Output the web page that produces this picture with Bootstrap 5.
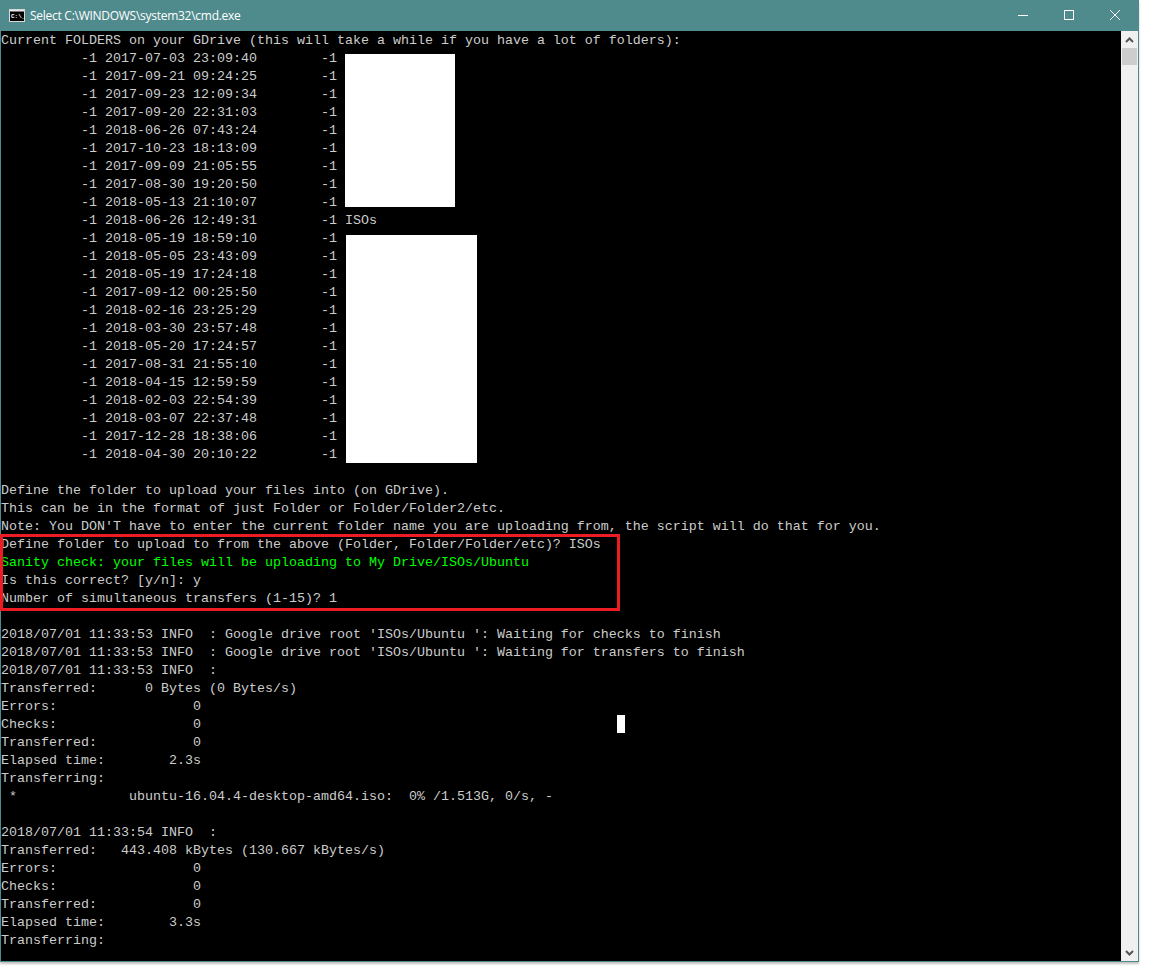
<!DOCTYPE html>
<html lang="en">
<head>
<meta charset="utf-8">
<title>cmd.exe</title>
<link href="https://cdn.jsdelivr.net/npm/bootstrap@5.3.0/dist/css/bootstrap.min.css" rel="stylesheet">
<style>
html,body{background:#fff;margin:0;height:100%;overflow:hidden}
.win{width:1139px;height:962px;border:1px solid #4f8a8c;border-top:0;box-shadow:0 2px 2px rgba(0,0,0,.25)}
.tbar{height:31px;background:#4f8a8c;color:#fff;font:12px/31px "Open Sans","Noto Sans",sans-serif;flex:none}
.ticon{margin-left:8px}
.ttl{margin-left:5px;letter-spacing:-.0225em}
.tbtn{width:46px;height:31px}
.tbtn svg{margin-top:-1px}
.body-row{height:930px}
.term{background:#000;color:#ccc;font:13.33px/18px "Liberation Mono",monospace;margin:0;padding-top:1px;overflow:hidden;white-space:pre;width:1120px}
.grn{color:#0f0}
.icotxt{font:bold 6px "Liberation Mono",monospace;fill:#fff}
.cover{position:absolute;background:#fff}
.cv1{left:344px;top:23px;width:110px;height:153px}
.cv2{left:345px;top:204px;width:131px;height:228px}
.cv3{left:616px;top:684px;width:8px;height:18px}
.redbox{position:absolute;left:-1px;top:503px;width:620px;height:77px;border:3px solid #ed1c24}
.sbar{width:17px;background:#f0f0f0}
.sthumb{height:17px;background:#cdcdcd;margin:0 1px}
.sarr{height:17px}
</style>
</head>
<body>
<div class="win d-flex flex-column">
  <div class="tbar d-flex align-items-center">
    <svg class="ticon" width="16" height="13" viewBox="0 0 16 13"><rect x=".5" y=".5" width="15" height="12" fill="#000" stroke="#d8d8d8"/><rect x="1" y="1" width="14" height="1.5" fill="#e8e8e8"/><text class="icotxt" x="2" y="9">C:\_</text></svg>
    <span class="ttl">Select C:\WINDOWS\system32\cmd.exe</span>
    <div class="ms-auto d-flex">
      <div class="tbtn d-flex align-items-center justify-content-center"><svg width="12" height="12" viewBox="0 0 12 12"><path d="M1 6.5h10" stroke="#fff"/></svg></div>
      <div class="tbtn d-flex align-items-center justify-content-center"><svg width="12" height="12" viewBox="0 0 12 12"><rect x="1.5" y="1.5" width="9" height="9" fill="none" stroke="#fff"/></svg></div>
      <div class="tbtn d-flex align-items-center justify-content-center"><svg width="12" height="12" viewBox="0 0 12 12"><path d="M1 1l10 10M11 1L1 11" stroke="#fff"/></svg></div>
    </div>
  </div>
  <div class="body-row d-flex position-relative">
<pre class="term flex-grow-1">Current FOLDERS on your GDrive (this will take a while if you have a lot of folders):
          -1 2017-07-03 23:09:40        -1
          -1 2017-09-21 09:24:25        -1
          -1 2017-09-23 12:09:34        -1
          -1 2017-09-20 22:31:03        -1
          -1 2018-06-26 07:43:24        -1
          -1 2017-10-23 18:13:09        -1
          -1 2017-09-09 21:05:55        -1
          -1 2017-08-30 19:20:50        -1
          -1 2018-05-13 21:10:07        -1
          -1 2018-06-26 12:49:31        -1 ISOs
          -1 2018-05-19 18:59:10        -1
          -1 2018-05-05 23:43:09        -1
          -1 2018-05-19 17:24:18        -1
          -1 2017-09-12 00:25:50        -1
          -1 2018-02-16 23:25:29        -1
          -1 2018-03-30 23:57:48        -1
          -1 2018-05-20 17:24:57        -1
          -1 2017-08-31 21:55:10        -1
          -1 2018-04-15 12:59:59        -1
          -1 2018-02-03 22:54:39        -1
          -1 2018-03-07 22:37:48        -1
          -1 2017-12-28 18:38:06        -1
          -1 2018-04-30 20:10:22        -1

Define the folder to upload your files into (on GDrive).
This can be in the format of just Folder or Folder/Folder2/etc.
Note: You DON'T have to enter the current folder name you are uploading from, the script will do that for you.
Define folder to upload to from the above (Folder, Folder/Folder/etc)? ISOs
<span class="grn">Sanity check: your files will be uploading to My Drive/ISOs/Ubuntu</span>
Is this correct? [y/n]: y
Number of simultaneous transfers (1-15)? 1

2018/07/01 11:33:53 INFO  : Google drive root 'ISOs/Ubuntu ': Waiting for checks to finish
2018/07/01 11:33:53 INFO  : Google drive root 'ISOs/Ubuntu ': Waiting for transfers to finish
2018/07/01 11:33:53 INFO  :
Transferred:      0 Bytes (0 Bytes/s)
Errors:                 0
Checks:                 0
Transferred:            0
Elapsed time:        2.3s
Transferring:
 *              ubuntu-16.04.4-desktop-amd64.iso:  0% /1.513G, 0/s, -

2018/07/01 11:33:54 INFO  :
Transferred:   443.408 kBytes (130.667 kBytes/s)
Errors:                 0
Checks:                 0
Transferred:            0
Elapsed time:        3.3s
Transferring:</pre>
    <div class="cover cv1"></div>
    <div class="cover cv2"></div>
    <div class="cover cv3"></div>
    <div class="redbox"></div>
    <div class="sbar d-flex flex-column">
      <div class="sarr d-flex align-items-center justify-content-center"><svg width="9" height="6" viewBox="0 0 9 6"><path d="M1 5l3.5-3.5L8 5" fill="none" stroke="#555" stroke-width="2"/></svg></div>
      <div class="sthumb"></div>
      <div class="flex-grow-1"></div>
      <div class="sarr d-flex align-items-center justify-content-center"><svg width="9" height="6" viewBox="0 0 9 6"><path d="M1 1l3.5 3.5L8 1" fill="none" stroke="#555" stroke-width="2"/></svg></div>
    </div>
  </div>
</div>
<script src="https://cdn.jsdelivr.net/npm/bootstrap@5.3.0/dist/js/bootstrap.bundle.min.js"></script>
</body>
</html>
